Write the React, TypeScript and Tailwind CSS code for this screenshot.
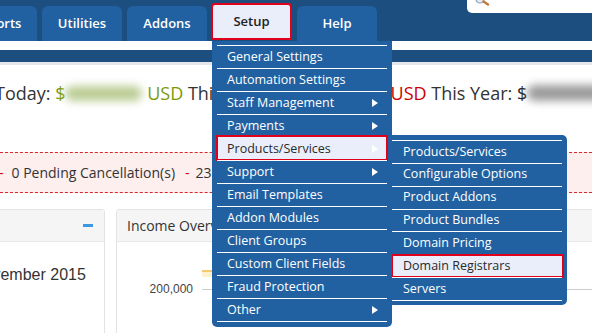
import React from "react";

type Item = { label: string; arrow?: boolean; active?: boolean };

const mainItems: Item[] = [
  { label: "General Settings" },
  { label: "Automation Settings" },
  { label: "Staff Management", arrow: true },
  { label: "Payments", arrow: true },
  { label: "Products/Services", arrow: true, active: true },
  { label: "Support", arrow: true },
  { label: "Email Templates" },
  { label: "Addon Modules" },
  { label: "Client Groups" },
  { label: "Custom Client Fields" },
  { label: "Fraud Protection" },
  { label: "Other", arrow: true },
];

const subItems: Item[] = [
  { label: "Products/Services" },
  { label: "Configurable Options" },
  { label: "Product Addons" },
  { label: "Product Bundles" },
  { label: "Domain Pricing" },
  { label: "Domain Registrars", active: true },
  { label: "Servers" },
];

function Tab({ children }: { children: React.ReactNode }) {
  return (
    <div className="h-[35px] w-[80px] shrink-0 rounded-t-[6px] bg-[#2161a1] flex items-center justify-center text-white text-[13px] font-semibold">
      {children}
    </div>
  );
}

function Blur({ className }: { className: string }) {
  return <span className={"inline-block shrink-0 rounded-full blur-[4px] " + className} />;
}

export default function App() {
  return (
    <div className="relative w-[592px] h-[333px] overflow-hidden bg-white font-['Open_Sans',sans-serif]">
      {/* Top navigation */}
      <div className="h-[41px] bg-[#1c4e7f] flex items-end">
        <div className="flex items-end gap-[5px] -ml-[43px]">
          <Tab>Reports</Tab>
          <Tab>Utilities</Tab>
          <Tab>Addons</Tab>
          <div className="h-[37px] w-[81px] -ml-px mb-px shrink-0 rounded-t-[4px] border-2 border-[#e0001b] bg-[#e9eefa] flex items-center justify-center text-[#222] text-[13px] font-semibold">
            Setup
          </div>
          <Tab>Help</Tab>
        </div>
        <div className="ml-auto self-start relative w-[125px] h-[13px] bg-white rounded-bl-[5px]">
          <svg className="absolute left-[8px] top-0" width="16" height="6" viewBox="0 0 16 6">
            <circle cx="5" cy="-1" r="4" fill="#e3ecf5" stroke="#8aa4be" strokeWidth="1.2" />
            <line x1="8.5" y1="1.5" x2="13" y2="4.5" stroke="#c27a3c" strokeWidth="2.4" strokeLinecap="round" />
          </svg>
        </div>
      </div>
      <div className="h-[9px] bg-white" />
      <div className="h-[12px] bg-[#1c4e7f]" />
      <div className="h-[3px] bg-[#e3e7ec]" />

      {/* Stats */}
      <div className="mt-[16px] -ml-[5px] flex items-center whitespace-nowrap text-[18px] leading-[24px] text-[#333]">
        <span className="shrink-0">Today:&nbsp;</span>
        <span className="shrink-0 text-[#7a9a08]">$</span>
        <Blur className="w-[77px] h-[15px] bg-[#bccd95]" />
        <span className="shrink-0 text-[#7a9a08]">&nbsp;USD</span>
        <span className="shrink-0">&nbsp;This Month:&nbsp;$</span>
        <Blur className="w-[84px] h-[15px] bg-[#bccd95]" />
        <span className="shrink-0 text-[#cc0000]">&nbsp;USD</span>
        <span className="shrink-0">&nbsp;This Year:&nbsp;</span>
        <span className="shrink-0 text-[#222]">$</span>
        <Blur className="w-[90px] h-[16px] bg-[#9c9c9c]" />
      </div>

      {/* Alert band */}
      <div className="mt-[47px] h-[41px] border-y border-dashed border-[#d9262b] bg-[#fcefee] flex items-center whitespace-nowrap text-[14px] text-[#333]">
        <span className="shrink-0 -ml-[1px] mr-[8px] text-[#cc0000]">-</span>
        <span className="shrink-0">0 Pending Cancellation(s)</span>
        <span className="shrink-0 ml-[10px] mr-[6px] text-[#cc0000]">-</span>
        <span className="shrink-0">23 Ticket(s) Awaiting Reply</span>
      </div>

      {/* Panels */}
      <div className="mt-[16px] flex gap-[11px]">
        <div className="-ml-[35px] w-[140px] h-[140px] shrink-0 border border-[#e3e3e3] rounded-t-[3px]">
          <div className="h-[32px] bg-[#f5f5f5] border-b border-[#e8e8e8] flex items-center justify-end pr-[11px]">
            <div className="w-[10px] h-[3px] bg-[#3b97e3]" />
          </div>
          <div className="mt-[23px] pl-[6px] whitespace-nowrap text-[16px] leading-[20px] text-[#333] font-['Liberation_Sans',Arial,sans-serif]">
            November 2015
          </div>
        </div>
        <div className="w-[520px] h-[140px] shrink-0 border border-[#e3e3e3] rounded-t-[3px]">
          <div className="h-[32px] bg-[#f5f5f5] border-b border-[#e8e8e8] flex items-center pl-[10px] text-[14px] text-[#333]">
            Income Overview
          </div>
          <div className="mt-[28px] ml-[85px] w-[20px] h-[7px] border-t-2 border-[#f6c870] bg-[#fdf1cf]" />
          <div className="mt-[5px] flex items-center h-[14px]">
            <div className="w-[76px] text-right text-[12px] leading-[14px] text-[#444] font-['Liberation_Sans',Arial,sans-serif]">
              200,000
            </div>
            <div className="ml-[9px] flex-1 h-px bg-[#cccccc]" />
          </div>
        </div>
      </div>

      {/* Setup dropdown */}
      <div className="absolute left-[212px] top-[41px] w-[180px] z-20 bg-[#2161a1] rounded-b-[5px] px-[5px] pt-[4px] pb-[5px] text-[12.5px] text-white">
        {mainItems.map((it) => (
          <div key={it.label} className="relative h-[23px] border-t border-white flex items-center pl-[10px] pr-[9px]">
            {it.active && (
              <div className="absolute -top-[3px] -bottom-px -left-px -right-px border-2 border-[#e0001b] bg-[#e9eefa]" />
            )}
            <span className={it.active ? "relative flex-1 whitespace-nowrap text-[#2a2a2a]" : "relative flex-1 whitespace-nowrap"}>
              {it.label}
            </span>
            {it.arrow && (
              <span className="relative w-0 h-0 border-y-[4px] border-y-transparent border-l-[6px] border-l-white" />
            )}
          </div>
        ))}
        <div className="border-t border-white" />
      </div>

      {/* Products/Services submenu */}
      <div className="absolute left-[387px] top-[135px] w-[180px] z-10 bg-[#2161a1] rounded-[5px] px-[5px] pt-[5px] pb-[4px] text-[12.5px] text-white">
        {subItems.map((it) => (
          <div key={it.label} className="relative h-[22.86px] border-t border-white flex items-center pl-[11px]">
            {it.active && (
              <div className="absolute -top-px -bottom-px -left-px -right-[2px] border-2 border-[#e0001b] bg-[#e9eefa]" />
            )}
            <span className={it.active ? "relative whitespace-nowrap text-[#2a2a2a]" : "relative whitespace-nowrap"}>
              {it.label}
            </span>
          </div>
        ))}
        <div className="border-t border-white" />
      </div>
    </div>
  );
}
